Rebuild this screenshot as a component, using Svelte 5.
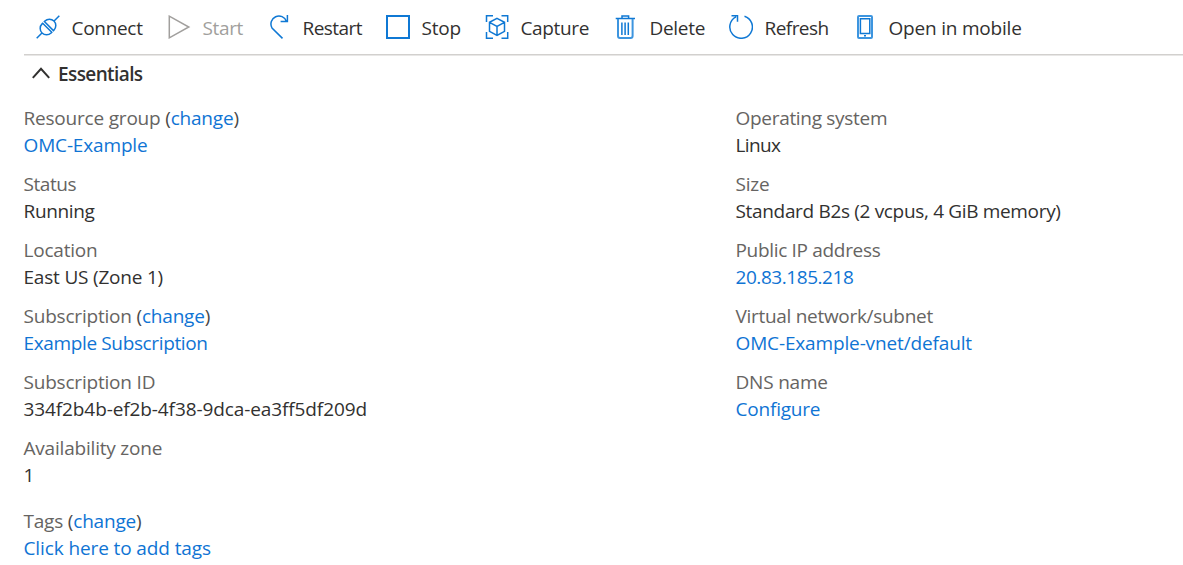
<script>
  const commands = [
    { icon: 'connect', label: 'Connect', tracking: -0.3 },
    { icon: 'start', label: 'Start', tracking: -0.35, disabled: true },
    { icon: 'restart', label: 'Restart', tracking: -0.55 },
    { icon: 'stop', label: 'Stop', tracking: -0.2 },
    { icon: 'capture', label: 'Capture', tracking: -0.35 },
    { icon: 'delete', label: 'Delete', tracking: -0.3 },
    { icon: 'refresh', label: 'Refresh', tracking: -0.55 },
    { icon: 'mobile', label: 'Open in mobile', tracking: -0.2 }
  ];

  const columns = [
    [
      { label: 'Resource group', change: true, value: 'OMC-Example', link: true, tracking: -0.15 },
      { label: 'Status', labelTracking: -0.45, value: 'Running', tracking: -0.35 },
      { label: 'Location', value: 'East US (Zone 1)' },
      { label: 'Subscription', change: true, value: 'Example Subscription', link: true, tracking: -0.36 },
      { label: 'Subscription ID', value: '334f2b4b-ef2b-4f38-9dca-ea3ff5df209d', tracking: -0.1 },
      { label: 'Availability zone', value: '1' },
      { label: 'Tags', change: true, value: 'Click here to add tags', link: true, tracking: -0.11, separate: true }
    ],
    [
      { label: 'Operating system', labelTracking: -0.3, value: 'Linux', tracking: -0.6 },
      { label: 'Size', value: 'Standard B2s (2 vcpus, 4 GiB memory)', tracking: -0.33 },
      { label: 'Public IP address', labelTracking: -0.32, value: '20.83.185.218', link: true, tracking: -0.44 },
      { label: 'Virtual network/subnet', labelTracking: -0.3, value: 'OMC-Example-vnet/default', link: true, tracking: -0.14 },
      { label: 'DNS name', value: 'Configure', link: true }
    ]
  ];

  const spacing = (value) => `${value ?? -0.2}px`;
</script>

<main>
  <nav class="toolbar">
    {#each commands as command}
      <button class="command" disabled={command.disabled}>
        <svg class="icon" viewBox="0 0 24 24" aria-hidden="true">
          {#if command.icon === 'connect'}
            <g transform="rotate(-45 12 12)">
              <path d="M-4 12h7.8M20.2 12H28M10.9 5.6H10a6.4 6.4 0 0 0 0 12.8h.9zM13.3 5.6h.7a6.4 6.4 0 0 1 0 12.8h-.7z" />
            </g>
          {:else if command.icon === 'start'}
            <path d="M2.3 1.2v21.6L21.8 12z" />
          {:else if command.icon === 'restart'}
            <path d="M15.5 23.4 5 13A8 8 0 1 1 19.5 6.4M20.4 0v6.5H13.6" />
          {:else if command.icon === 'stop'}
            <path class="thick" d="M1 1h22v22H1z" />
          {:else if command.icon === 'capture'}
            <path d="M1.5 7V.8H8M16.5 .8h6.2V7M22.7 17v6.2h-6.2M8 23.2H1.5V17M12 3.4l7.5 3.9v9L12 20.5l-7.5-4.2v-9zM4.5 7.3l7.5 4 7.5-4M12 11.3v9.2" />
          {:else if command.icon === 'delete'}
            <path d="M1.7 3.5H21M8 3.2V1h6.6v2.2M7.9 7.5V20M11.1 7.5V20M14.3 7.5V20" />
            <path class="soft" d="M4 4v17a2 2 0 0 0 2 2h10.6a2 2 0 0 0 2-2V4" />
          {:else if command.icon === 'refresh'}
            <path d="M15.5 1.2A11.3 11.3 0 1 1 7 1.9M2.5 .8h6v6" />
          {:else}
            <path class="soft" d="M6 1h12a1 1 0 0 1 1 1v20a1 1 0 0 1-1 1H6a1 1 0 0 1-1-1V2a1 1 0 0 1 1-1z" />
            <path d="M7.4 3.8h9.4v14.8H7.4z" />
            <path class="solid" d="M11 20h2v1.6h-2z" />
          {/if}
        </svg>
        <span style:letter-spacing={spacing(command.tracking)}>{command.label}</span>
      </button>
    {/each}
  </nav>

  <button class="essentials">
    <svg class="chevron" viewBox="0 0 18 12" aria-hidden="true"><path d="m.8 10.8 8.2-9 8.2 9" /></svg>
    <span>Essentials</span>
  </button>

  <div class="details">
    {#each columns as rows}
      <dl>
        {#each rows as row}
          <div class="row" class:separate={row.separate}>
            <dt style:letter-spacing={spacing(row.labelTracking)}>{row.label}{#if row.change}{' '}<span class="paren">(</span><a href="#change">change</a><span class="paren">)</span>{/if}</dt>
            <dd style:letter-spacing={spacing(row.tracking)}>{#if row.link}<a href="#open">{row.value}</a>{:else}{row.value}{/if}</dd>
          </div>
        {/each}
      </dl>
    {/each}
  </div>
</main>

<style>
  :global(body) {
    background: #fff;
    overflow: hidden;
  }
  main {
    height: 565px;
    font-family: "Open Sans", "Noto Sans", sans-serif;
    font-size: 19px;
    line-height: 27px;
    color: #323130;
  }
  button {
    padding: 0;
    border: 0;
    background: none;
    font: inherit;
    color: inherit;
    white-space: nowrap;
  }
  .toolbar {
    display: grid;
    grid-template-columns: 131px 100px 119px 99px 129px 115px 124px 1fr;
    height: 54px;
    margin-left: 24px;
    padding-left: 12px;
    box-sizing: border-box;
    box-shadow: 0 1.5px 0 #d2d0ce;
  }
  .command {
    display: flex;
    align-items: center;
    gap: 12px;
  }
  .command span {
    padding-top: 2px;
    margin-left: -0.5px;
  }
  .command:disabled {
    color: #a19f9d;
  }
  .icon {
    width: 24px;
    height: 24px;
    flex: none;
    color: #0f78d4;
  }
  :disabled .icon {
    color: #a19f9d;
  }
  svg path {
    fill: none;
    stroke: currentColor;
    stroke-width: 1.5;
  }
  svg .thick {
    stroke-width: 2;
  }
  svg .soft {
    stroke: #3d95df;
    stroke-width: 2;
  }
  svg .solid {
    fill: currentColor;
    stroke: none;
  }
  .essentials {
    display: flex;
    align-items: center;
    gap: 8px;
    height: 27px;
    margin: 7px 0 0 32px;
    font-weight: 600;
    letter-spacing: -0.6px;
  }
  .chevron {
    width: 18px;
    height: 12px;
    margin-top: -4px;
  }
  .chevron path {
    stroke-width: 2;
  }
  .details {
    display: grid;
    grid-template-columns: 712px 1fr;
    padding: 17px 0 0 23.5px;
  }
  dl {
    display: flex;
    flex-direction: column;
    gap: 12px;
    margin: 0;
  }
  .separate {
    margin-top: 7px;
  }
  dt {
    color: #666462;
  }
  dd {
    margin: 0;
  }
  .paren {
    color: #4a4846;
  }
  a {
    color: #0f74d4;
    text-decoration: none;
  }
</style>
